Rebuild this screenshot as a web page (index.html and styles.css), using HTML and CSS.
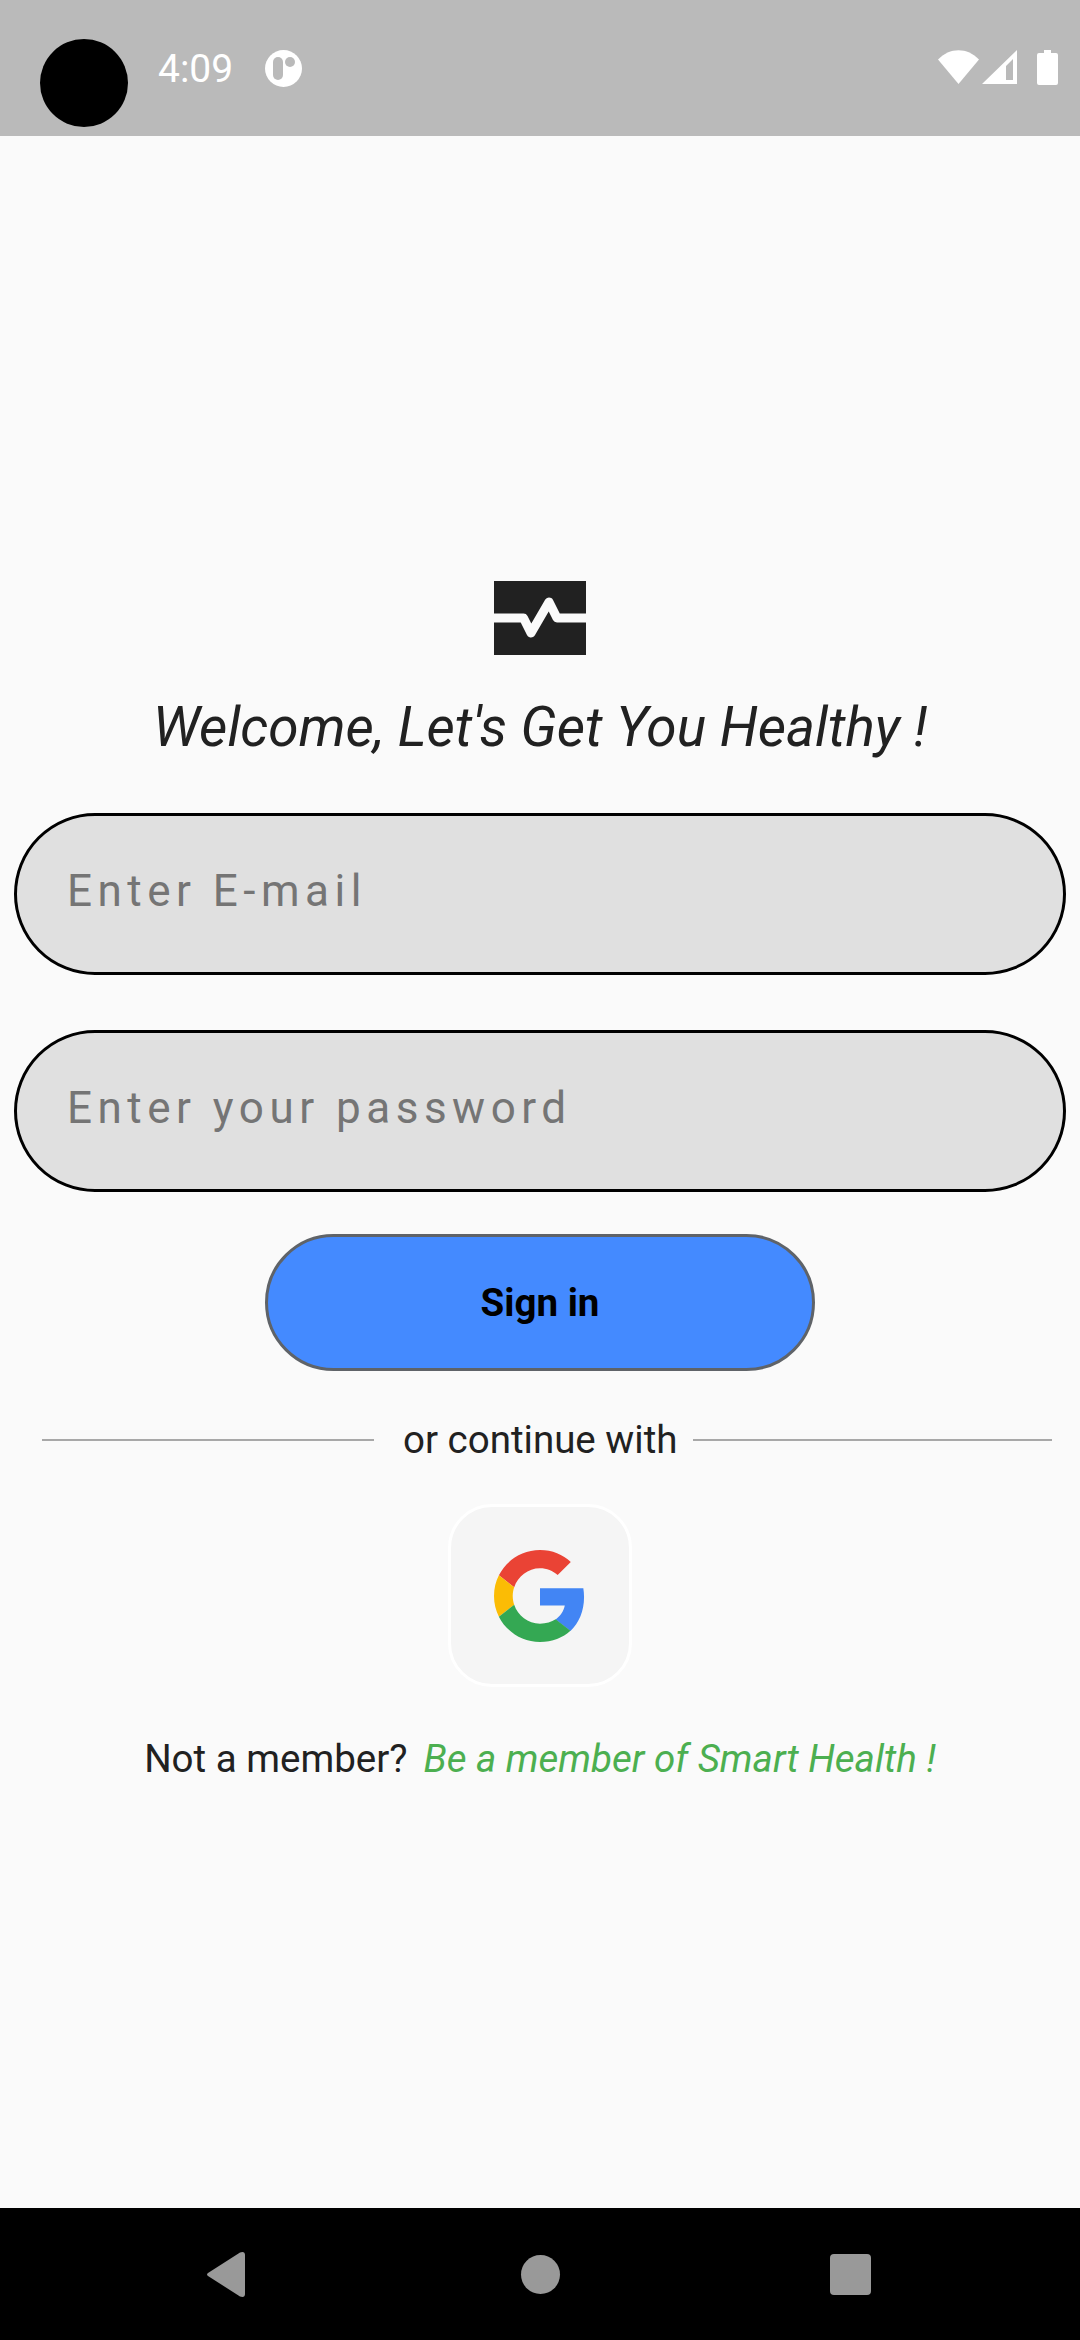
FILE: index.html
```html
<!DOCTYPE html>
<html lang="en">
<head>
<meta charset="utf-8">
<title>Smart Health</title>
<link rel="stylesheet" href="styles.css">
</head>
<body>
<div class="screen">
  <header class="status">
    <div class="camera"></div>
    <span class="time">4:09</span>
    <svg class="app-icon" viewBox="0 0 37 37"><circle cx="18.5" cy="18.5" r="18.5" fill="#fff"/><rect x="8" y="7" width="10" height="23" rx="5" fill="#bababa"/><circle cx="25" cy="12" r="5" fill="#bababa"/></svg>
    <div class="status-right">
      <svg class="wifi" viewBox="0 0 41 34"><path d="M0 9.500C11.500-3 29.500-3 41 9.500L20.500 34z" fill="#fff"/></svg>
      <svg class="cell" viewBox="0 0 35 34"><path d="M35 0V34H0zM31 9 24 16V30H31z" fill="#fff" fill-rule="evenodd"/></svg>
      <svg class="battery" viewBox="0 0 21 35"><path d="M7 0H14V3H19Q21 3 21 5V33Q21 35 19 35H2Q0 35 0 33V5Q0 3 2 3H7z" fill="#fff"/></svg>
    </div>
  </header>
  <main class="main">
    <svg class="logo" viewBox="0 0 92 74"><rect width="92" height="74" fill="#212121"/><path d="M0 37H29.500L37 52 55 21 63 37H92" fill="none" stroke="#fafafa" stroke-width="9" stroke-linejoin="round"/></svg>
    <h1 class="title">Welcome, Let's Get You Healthy !</h1>
    <div class="field">Enter E-mail</div>
    <div class="field field-second">Enter your password</div>
    <button class="signin">Sign in</button>
    <div class="divider"><span class="rule rule-left"></span><span class="divider-text">or continue with</span><span class="rule"></span></div>
    <div class="google">
      <svg class="g-logo" viewBox="0 0 48 48">
        <path fill="#EA4335" d="M24 9.500c3.540 0 6.710 1.220 9.210 3.600l6.850-6.850C35.900 2.380 30.470 0 24 0 14.620 0 6.510 5.380 2.560 13.220l7.980 6.190C12.430 13.720 17.740 9.500 24 9.500z"/>
        <path fill="#4285F4" d="M46.980 24.550c0-1.570-.15-3.090-.38-4.550H24v9.020h12.940c-.58 2.960-2.260 5.480-4.780 7.180l7.730 6c4.510-4.180 7.090-10.360 7.090-17.650z"/>
        <path fill="#FBBC05" d="M10.530 28.590c-.48-1.450-.76-2.990-.76-4.590s.27-3.140.76-4.590l-7.980-6.190C.92 16.460 0 20.120 0 24c0 3.880.92 7.540 2.560 10.780l7.970-6.190z"/>
        <path fill="#34A853" d="M24 48c6.480 0 11.930-2.130 15.890-5.810l-7.730-6c-2.150 1.450-4.920 2.300-8.160 2.300-6.260 0-11.570-4.220-13.470-9.910l-7.980 6.190C6.510 42.620 14.620 48 24 48z"/>
      </svg>
    </div>
    <p class="member"><span>Not a member?</span><a class="member-link">Be a member of Smart Health !</a></p>
  </main>
  <nav class="nav">
    <svg class="nav-back" viewBox="0 0 38 45"><path d="M1 21 33 .5Q38-1 38 3V42Q38 46 33 44.500L1 24Q-1 22.500 1 21z" fill="#999"/></svg>
    <div class="nav-home"></div>
    <div class="nav-recent"></div>
  </nav>
</div>
</body>
</html>
```
FILE: styles.css
```css
* { box-sizing: border-box; }
html, body { margin: 0; padding: 0; }
body { font-family: Roboto, "Liberation Sans", sans-serif; background: #fafafa; color: #212121; }
.screen { width: 1080px; height: 2340px; display: flex; flex-direction: column; overflow: hidden; }

.status { height: 136px; background: #bababa; display: flex; align-items: flex-start; padding: 39px 22px 0 40px; flex: none; }
.camera { width: 88px; height: 88px; border-radius: 50%; background: #000; }
.time { color: #fff; font-size: 39px; font-weight: 400; line-height: 60px; margin-left: 30px; }
.app-icon { width: 37px; height: 37px; margin: 11px 0 0 32px; }
.status-right { margin-left: auto; display: flex; align-items: flex-start; margin-top: 11px; }
.wifi { width: 41px; height: 34px; }
.cell { width: 35px; height: 34px; margin-left: 3px; }
.battery { width: 21px; height: 35px; margin-left: 20px; }

.main { flex: 1; display: flex; flex-direction: column; align-items: center; padding-top: 445px; }
.logo { width: 92px; height: 74px; display: block; }
.title { margin: 40px 0 0; font-size: 55px; line-height: 64px; font-weight: 400; font-style: italic; }
.field { width: 1052px; height: 162px; margin-top: 54px; padding: 49px 0 0 50px; border: 3px solid #000; border-radius: 81px; background: #e0e0e0; color: #757575; font-size: 44px; line-height: 52px; letter-spacing: 5.5px; }
.field-second { margin-top: 55px; }
.signin { width: 550px; height: 137px; margin-top: 42px; padding: 0; border: 3px solid #5f6368; border-radius: 69px; background: #448aff; color: #000; font-family: inherit; font-size: 38.5px; font-weight: 700; }
.divider { width: 1010px; align-self: flex-start; margin-left: 42px; display: flex; align-items: center; margin-top: 47px; height: 44px; }
.rule { flex: 1; height: 2px; background: #a8a8a8; }
.rule-left { flex: none; width: 332px; }
.divider-text { font-size: 38.5px; line-height: 44px; margin: 0 16px 0 29px; }
.google { width: 184px; height: 183px; margin-top: 42px; border: 3px solid #fff; border-radius: 44px; background: #f5f5f5; display: flex; align-items: center; justify-content: center; }
.g-logo { width: 92px; height: 94px; }
.member { margin: 49px 0 0; font-size: 38.5px; line-height: 46px; display: flex; }
.member-link { margin-left: 16px; color: #4caf50; font-style: italic; }

.nav { height: 132px; background: #000; flex: none; display: flex; align-items: center; padding-left: 207px; }
.nav-back { width: 38px; height: 45px; }
.nav-home { width: 39px; height: 39px; margin-left: 276px; border-radius: 50%; background: #999; }
.nav-recent { width: 41px; height: 41px; margin-left: 270px; border-radius: 4px; background: #999; }
```
